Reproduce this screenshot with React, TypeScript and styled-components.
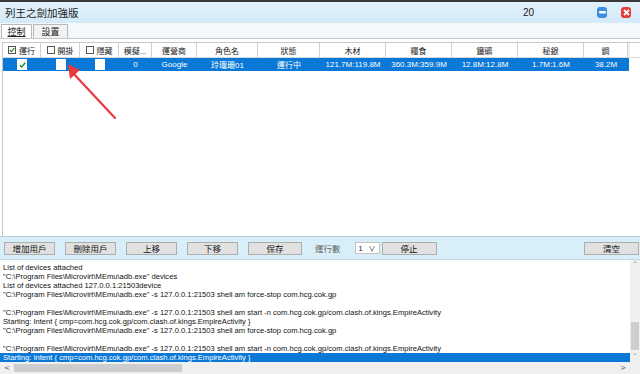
import React from "react";
import styled, { createGlobalStyle } from "styled-components";

const Global = createGlobalStyle`
  html, body { margin: 0; padding: 0; background: #fff; }
  body { font-family: "Liberation Sans", "Noto Sans CJK TC", sans-serif; }
`;

const CJK = `"Liberation Sans", "Noto Sans CJK TC", sans-serif`;

const Window = styled.div`
  width: 640px;
  height: 374px;
  display: flex;
  flex-direction: column;
  overflow: hidden;
  background: #fff;
  position: relative;
`;

const TopStrip = styled.div`
  height: 2px;
  background: #3a3a3a;
`;

const TitleBar = styled.div`
  height: 21px;
  display: flex;
  align-items: center;
  background: linear-gradient(#e2f1fb, #d4eaf8);
  padding: 0 9px 0 5px;
  font-family: ${CJK};
`;

const Title = styled.div`
  font-size: 10.5px;
  color: #1a1a1a;
  flex: 1;
`;

const Counter = styled.div`
  font-size: 10px;
  color: #222;
  margin-right: 49px;
`;

const WinBtn = styled.div<{ $c: string }>`
  width: 10px;
  height: 11px;
  border-radius: 3px;
  background: ${(p) => p.$c};
  display: flex;
  align-items: center;
  justify-content: center;
  margin-left: 14px;
`;

const TabStrip = styled.div`
  height: 15px;
  display: flex;
  align-items: flex-end;
  background: #f3f8fb;
  padding-left: 1px;
  font-family: ${CJK};
  border-bottom: 1px solid #c8c8c8;
`;

const Tab = styled.div<{ $active?: boolean }>`
  height: 14px;
  display: flex;
  align-items: center;
  justify-content: center;
  font-size: 9px;
  color: #222;
  box-sizing: border-box;
  border: 1px solid #b9b9b9;
  border-bottom: none;
  background: ${(p) => (p.$active ? "#fff" : "#f2f2f2")};
  width: ${(p) => (p.$active ? "31px" : "35px")};
  margin-right: 1px;
  span { text-decoration: ${(p) => (p.$active ? "underline" : "none")}; }
`;

const GridPanel = styled.div`
  flex: 1;
  margin: 3px 0 0 2px;
  border-left: 1px solid #c8c8c8;
  border-top: 1px solid #c8c8c8;
  background: #fff;
  font-family: ${CJK};
`;

const cols = [38, 39, 39, 33, 45, 61, 62, 66, 66, 66, 66, 44];

const HeaderRow = styled.div`
  display: flex;
  height: 14px;
  border-bottom: 1px solid #d8d8d8;
  background: #fff;
`;

const HeadCell = styled.div<{ $w: number }>`
  width: ${(p) => p.$w}px;
  flex: none;
  box-sizing: border-box;
  border-right: 1px solid #d0d0d0;
  display: flex;
  align-items: center;
  justify-content: center;
  font-size: 8px;
  color: #222;
  white-space: nowrap;
  overflow: hidden;
  gap: 3px;
`;

const HeadFill = styled.div`
  flex: 1;
  background: #f0f0f0;
  max-width: 2px;
`;

const Box = styled.span<{ $size?: number }>`
  width: ${(p) => p.$size ?? 8}px;
  height: ${(p) => p.$size ?? 8}px;
  box-sizing: border-box;
  border: 1px solid #555;
  background: #fff;
  display: inline-flex;
  align-items: center;
  justify-content: center;
  flex: none;
`;

const DataRow = styled.div`
  display: flex;
  height: 13px;
  width: 626px;
  background: #0a78d7;
`;

const DataCell = styled.div<{ $w: number }>`
  width: ${(p) => p.$w}px;
  flex: none;
  display: flex;
  align-items: center;
  justify-content: center;
  font-size: 8px;
  color: #fff;
  white-space: nowrap;
`;

const CellBox = styled.span`
  width: 10px;
  height: 11px;
  background: #fff;
  display: inline-flex;
  align-items: center;
  justify-content: center;
`;

const ButtonBar = styled.div`
  height: 22px;
  background: #d8eff9;
  border-top: 1px solid #b8c8d0;
  border-bottom: 1px solid #c4d4dc;
  display: flex;
  align-items: center;
  padding: 0 1px 0 4px;
  gap: 10px;
  font-family: ${CJK};
`;

const Btn = styled.div<{ $w?: number }>`
  width: ${(p) => p.$w ?? 51}px;
  height: 13px;
  box-sizing: border-box;
  background: #e1e1e1;
  border: 1px solid #adadad;
  display: flex;
  align-items: center;
  justify-content: center;
  font-size: 8.5px;
  color: #111;
  flex: none;
`;

const Label = styled.div`
  font-size: 8.5px;
  color: #666;
  margin-left: 3px;
`;

const SelectBox = styled.div`
  width: 25px;
  height: 12px;
  box-sizing: border-box;
  background: #fff;
  border: 1px solid #c4c4c4;
  display: flex;
  align-items: center;
  justify-content: space-between;
  padding: 0 3px;
  font-size: 7px;
  color: #111;
  margin-left: 4px;
  margin-right: -8px;
`;

const Spacer = styled.div`
  flex: 1;
`;

const LogArea = styled.div`
  height: 114px;
  display: grid;
  grid-template-columns: 1fr 10px;
  grid-template-rows: 1fr 12px;
  background: #fff;
`;

const LogText = styled.div`
  padding-top: 3px;
  overflow: hidden;
  font-family: "Liberation Sans", sans-serif;
  font-size: 7.6px;
  line-height: 9px;
  color: #111;
`;

const LogLine = styled.div<{ $sel?: boolean }>`
  height: 9px;
  white-space: pre;
  padding-left: 3px;
  background: ${(p) => (p.$sel ? "#0a78d7" : "transparent")};
  color: ${(p) => (p.$sel ? "#fff" : "#111")};
`;

const VScroll = styled.div`
  background: #f0f0f0;
  display: flex;
  flex-direction: column;
  align-items: center;
`;

const Arrow = styled.div`
  font-size: 7px;
  color: #555;
  height: 10px;
  line-height: 10px;
  font-family: "DejaVu Sans", sans-serif;
`;

const VTrack = styled.div`
  flex: 1;
  width: 100%;
  display: flex;
  flex-direction: column;
  justify-content: flex-end;
  padding-bottom: 2px;
`;

const VThumb = styled.div`
  height: 28px;
  width: 8px;
  margin-left: 1px;
  background: #cdcdcd;
`;

const HScroll = styled.div`
  background: #f0f0f0;
  display: flex;
  align-items: center;
  padding: 0 4px 0 4px;
  gap: 4px;
`;

const HThumb = styled.div`
  width: 168px;
  height: 8px;
  background: #cdcdcd;
`;

const Corner = styled.div`
  background: #f0f0f0;
`;

const ArrowOverlay = styled.svg`
  position: absolute;
  left: 0;
  top: 0;
  pointer-events: none;
`;

const headers = ["運行", "開掛", "隱藏", "模擬...", "運營商", "角色名", "狀態", "木材", "糧食", "鐵礦", "秘銀", "鋼"];
const rowData = ["", "", "", "0", "Google", "玲瓏珊01", "運行中", "121.7M:119.8M", "360.3M:359.9M", "12.8M:12.8M", "1.7M:1.6M", "38.2M"];

const ADB = `"C:\\Program Files\\Microvirt\\MEmu\\adb.exe"`;
const logs = [
  "List of devices attached",
  `${ADB} devices`,
  "List of devices attached 127.0.0.1:21503device",
  `${ADB} -s 127.0.0.1:21503 shell am force-stop com.hcg.cok.gp`,
  "",
  `${ADB} -s 127.0.0.1:21503 shell am start -n com.hcg.cok.gp/com.clash.of.kings.EmpireActivity`,
  "Starting: Intent { cmp=com.hcg.cok.gp/com.clash.of.kings.EmpireActivity }",
  `${ADB} -s 127.0.0.1:21503 shell am force-stop com.hcg.cok.gp`,
  "",
  `${ADB} -s 127.0.0.1:21503 shell am start -n com.hcg.cok.gp/com.clash.of.kings.EmpireActivity`,
  "Starting: Intent { cmp=com.hcg.cok.gp/com.clash.of.kings.EmpireActivity }",
];

const Check = () => (
  <svg width="7" height="6" viewBox="0 0 7 6">
    <path d="M0.8 3.2 L2.7 5 L6.2 0.8" stroke="#1c8a2e" strokeWidth="1.4" fill="none" />
  </svg>
);

export default function App() {
  return (
    <>
      <Global />
      <Window>
        <TopStrip />
        <TitleBar>
          <Title>列王之劍加強版</Title>
          <Counter>20</Counter>
          <WinBtn $c="#3b8fe0">
            <svg width="7" height="3"><rect width="7" height="2.4" rx="1" fill="#fff" /></svg>
          </WinBtn>
          <WinBtn $c="#e53b3b">
            <svg width="7" height="7" viewBox="0 0 7 7">
              <path d="M1 1 L6 6 M6 1 L1 6" stroke="#fff" strokeWidth="1.8" />
            </svg>
          </WinBtn>
        </TitleBar>
        <TabStrip>
          <Tab $active><span>控制</span></Tab>
          <Tab>設置</Tab>
        </TabStrip>
        <GridPanel>
          <HeaderRow>
            {headers.map((h, i) => (
              <HeadCell key={h} $w={cols[i]}>
                {i < 3 && (
                  <Box>{i === 0 && <Check />}</Box>
                )}
                {h}
              </HeadCell>
            ))}
            <HeadFill />
          </HeaderRow>
          <DataRow>
            {rowData.map((d, i) => (
              <DataCell key={i} $w={cols[i]}>
                {i < 3 ? <CellBox>{i === 0 && <Check />}</CellBox> : d}
              </DataCell>
            ))}
          </DataRow>
        </GridPanel>
        <ButtonBar>
          <Btn>增加用戶</Btn>
          <Btn>刪除用戶</Btn>
          <Btn>上移</Btn>
          <Btn>下移</Btn>
          <Btn $w={54}>保存</Btn>
          <Label>運行數</Label>
          <SelectBox>
            <span>1</span>
            <span>∨</span>
          </SelectBox>
          <Btn $w={55}>停止</Btn>
          <Spacer />
          <Btn $w={55}>清空</Btn>
        </ButtonBar>
        <LogArea>
          <LogText>
            {logs.map((l, i) => (
              <LogLine key={i} $sel={i === logs.length - 1}>{l}</LogLine>
            ))}
          </LogText>
          <VScroll>
            <Arrow>˄</Arrow>
            <VTrack><VThumb /></VTrack>
            <Arrow>˅</Arrow>
          </VScroll>
          <HScroll>
            <Arrow>&lt;</Arrow>
            <HThumb />
            <Spacer />
            <Arrow>&gt;</Arrow>
          </HScroll>
          <Corner />
        </LogArea>
        <ArrowOverlay width="640" height="374">
          <line x1="115" y1="118" x2="72" y2="72" stroke="#e83a3e" strokeWidth="2.2" strokeLinecap="round" />
          <polygon points="68,64 80,70 70,79" fill="#e83a3e" />
        </ArrowOverlay>
      </Window>
    </>
  );
}
